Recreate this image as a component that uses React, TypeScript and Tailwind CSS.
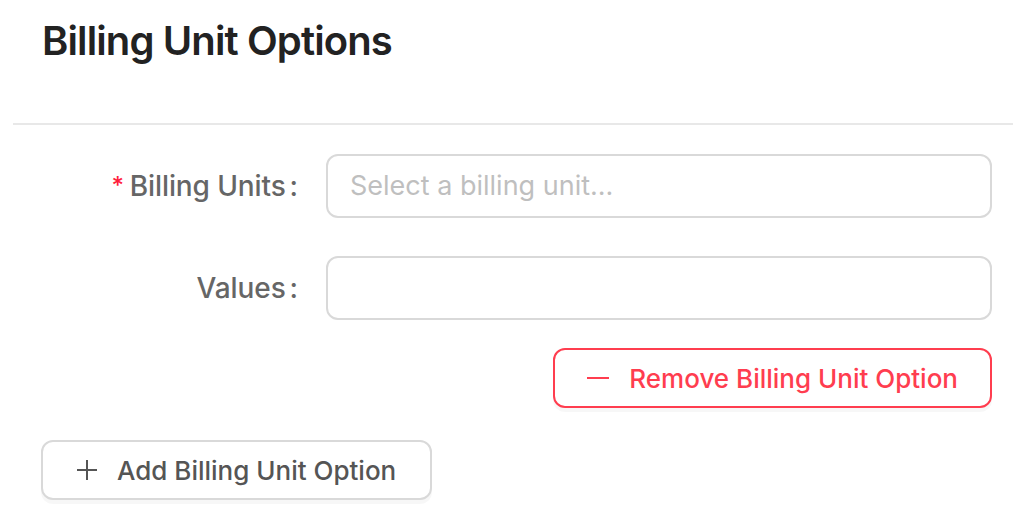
import React from "react";

function MinusIcon() {
  return (
    <svg width="22" height="22" viewBox="0 0 22 22" className="shrink-0">
      <line x1="0" y1="11" x2="22" y2="11" stroke="currentColor" strokeWidth="2" />
    </svg>
  );
}

function PlusIcon() {
  return (
    <svg width="20" height="20" viewBox="0 0 20 20" className="shrink-0">
      <line x1="0" y1="10" x2="20" y2="10" stroke="currentColor" strokeWidth="2" />
      <line x1="10" y1="0" x2="10" y2="20" stroke="currentColor" strokeWidth="2" />
    </svg>
  );
}

export default function App() {
  return (
    <div
      className="min-h-screen bg-white pl-[13px] pr-[21px]"
      style={{ fontFamily: "Inter, 'Liberation Sans', sans-serif" }}
    >
      <div className="pl-[29px] pt-[13px] pb-[54px]">
        <h1 className="text-[40px] font-semibold leading-[56px] tracking-[-0.022em] text-[#222]">
          Billing Unit Options
        </h1>
      </div>
      <div className="border-b-2 border-[#e8e8e8]" />

      <div className="pl-[28px] pr-[21px] pt-[29px]">
        <div className="flex items-center">
          <label className="flex w-[285px] shrink-0 items-center justify-end pr-[28px] text-[28px] font-medium tracking-[-0.004em] text-[#666]">
            <span className="mr-[6px] text-[24px] text-[#ff1f3d]">*</span>
            Billing Units
            <span className="ml-[4px]">:</span>
          </label>
          <div className="flex h-[64px] flex-1 items-center rounded-[12px] border-2 border-[#d9d9d9] px-[22px]">
            <input
              className="w-full bg-transparent text-[27px] text-[#333] outline-none placeholder:text-[#bfbfbf]"
              placeholder="Select a billing unit..."
            />
          </div>
        </div>

        <div className="mt-[38px] flex items-center">
          <label className="flex w-[285px] shrink-0 items-center justify-end pr-[28px] text-[28px] font-medium tracking-[-0.004em] text-[#666]">
            Values
            <span className="ml-[4px]">:</span>
          </label>
          <div className="flex h-[64px] flex-1 items-center rounded-[12px] border-2 border-[#d9d9d9] px-[22px]">
            <input className="w-full bg-transparent text-[27px] text-[#333] outline-none" />
          </div>
        </div>

        <div className="mt-[28px] flex justify-end">
          <button className="flex h-[60px] items-center gap-[20px] rounded-[12px] border-2 border-[#ff3d4f] bg-white pl-[32px] pr-[32px] text-[26px] font-medium text-[#ff3d4f] shadow-[0_4px_0_rgba(0,0,0,0.03)]">
            <MinusIcon />
            Remove Billing Unit Option
          </button>
        </div>

        <div className="mt-[32px] flex">
          <button className="flex h-[60px] items-center gap-[20px] rounded-[12px] border-2 border-[#d9d9d9] bg-white px-[34px] text-[26px] font-medium text-[#555] shadow-[0_4px_0_rgba(0,0,0,0.03)]">
            <PlusIcon />
            Add Billing Unit Option
          </button>
        </div>
      </div>
    </div>
  );
}
